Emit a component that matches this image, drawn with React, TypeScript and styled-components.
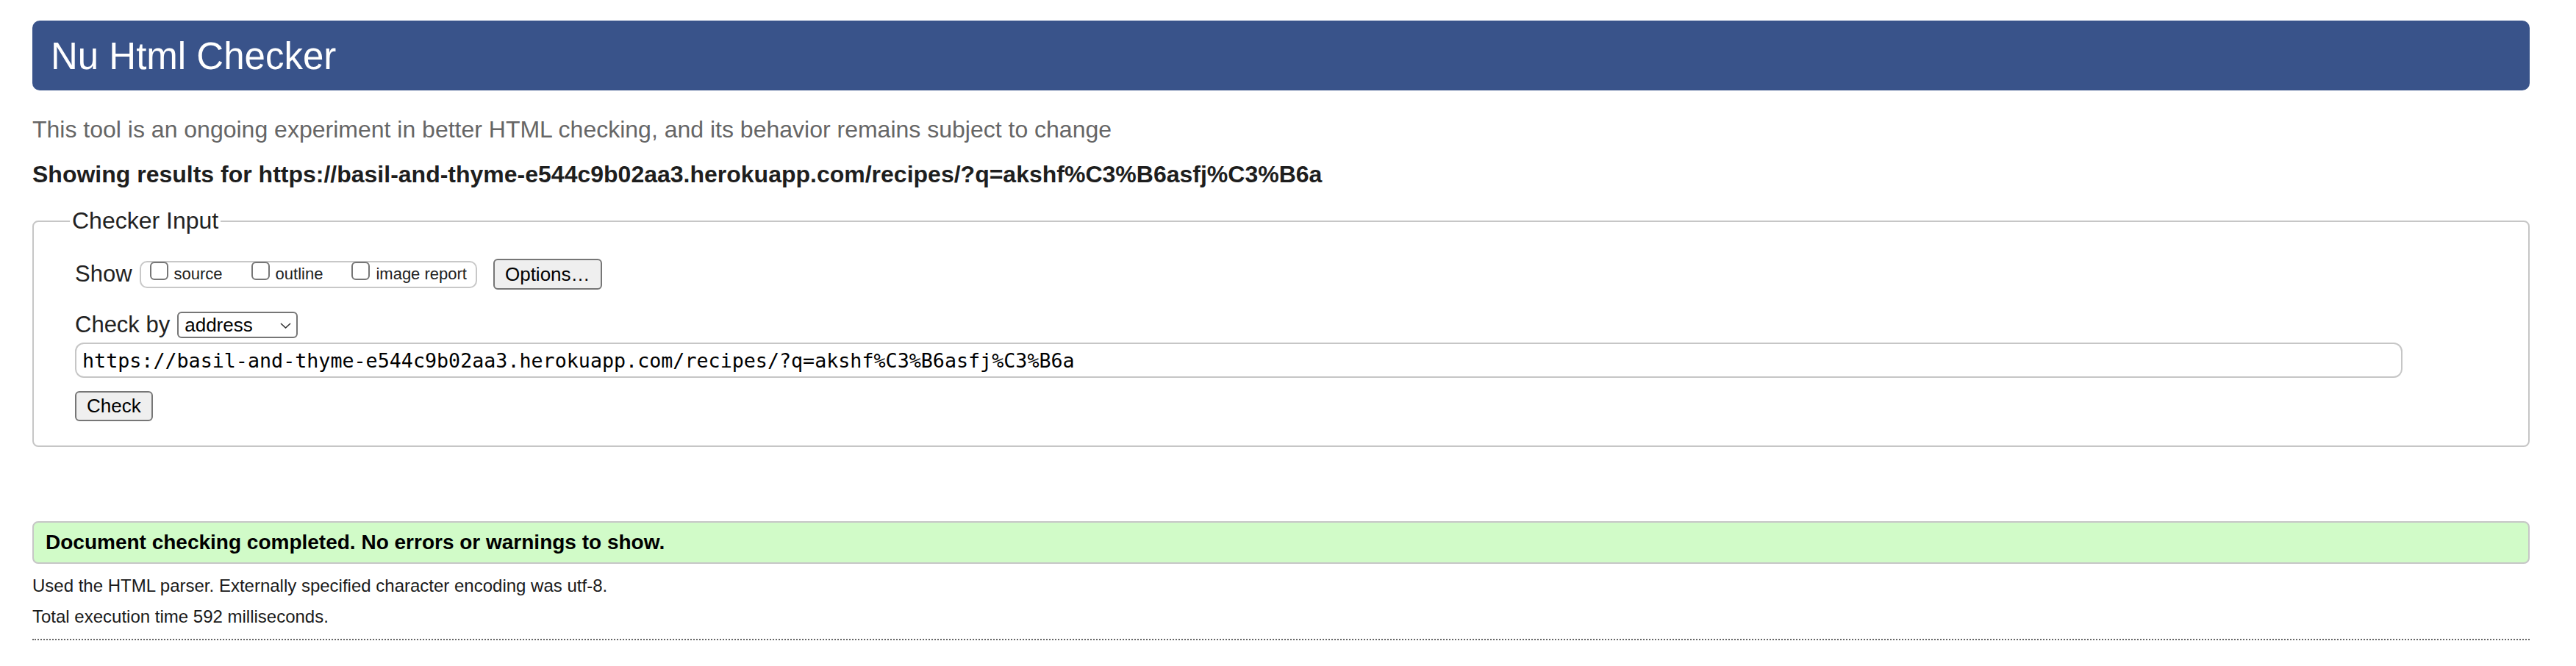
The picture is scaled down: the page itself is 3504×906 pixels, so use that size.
import React from "react";
import styled, { createGlobalStyle } from "styled-components";

/* Global */
const GlobalStyle = createGlobalStyle`
  html, body {
    margin: 0;
    padding: 0;
    background: #fff;
  }
  body {
    font-family: "Liberation Sans", Arial, Helvetica, sans-serif;
    color: #222;
  }
`;

/* Layout */
const Page = styled.main`
  width: 3397px;
  margin-left: 44px;
  padding-top: 28px;
`;

const Header = styled.h1`
  margin: 0;
  height: 95px;
  padding-left: 25px;
  background: #39538a;
  border-radius: 10px;
  color: #fff;
  font-size: 51px;
  font-weight: 400;
  line-height: 97px;
`;

const Intro = styled.p`
  margin: 35px 0 0;
  font-size: 32px;
  line-height: 36px;
  color: #666;
`;

const ResultsFor = styled.p`
  margin: 25px 0 0;
  font-size: 32px;
  font-weight: 700;
  line-height: 36px;
  color: #1e1e1e;
`;

/* Checker input form */
const InputSet = styled.fieldset`
  margin: 27px 0 0;
  padding: 33px 171px 33px 49px;
  border: 2px solid #c6c6c6;
  border-radius: 8px;
  min-width: 0;
`;

const Legend = styled.legend`
  padding: 0 3px;
  font-size: 32px;
  line-height: 37px;
  color: #222;
`;

const Rows = styled.div`
  padding-left: 7px;
  display: flex;
  flex-direction: column;
  align-items: flex-start;
`;

const Row = styled.div<{ $height: number; $top?: number }>`
  display: flex;
  align-items: center;
  height: ${(p) => p.$height}px;
  margin-top: ${(p) => p.$top ?? 0}px;
`;

const RowLabel = styled.span`
  font-size: 31px;
  color: #222;
`;

const ShowGroup = styled.span`
  display: flex;
  align-items: flex-start;
  gap: 31px;
  margin-left: 10px;
  height: 37px;
  box-sizing: border-box;
  padding: 0 12px 0 4px;
  border: 2px solid #c8c8c8;
  border-radius: 10px;
`;

const Option = styled.label`
  display: flex;
  align-items: flex-end;
  margin-top: -1px;
  font-size: 22px;
  line-height: 22px;
  color: #222;
`;

const Checkbox = styled.input.attrs({ type: "checkbox" })`
  appearance: none;
  width: 25px;
  height: 25px;
  margin: 0 8px 3px 8px;
  box-sizing: border-box;
  border: 2px solid #767676;
  border-radius: 6px;
  background: #fff;
`;

const Button = styled.button<{ $left?: number; $top?: number; $height: number }>`
  margin: ${(p) => p.$top ?? 0}px 0 0 ${(p) => p.$left ?? 0}px;
  height: ${(p) => p.$height}px;
  padding: 0 14px;
  box-sizing: border-box;
  border: 2px solid #767676;
  border-radius: 6px;
  background: #efefef;
  font-family: "Liberation Sans", Arial, sans-serif;
  font-size: 26px;
  color: #000;
`;

const SelectWrap = styled.span`
  position: relative;
  display: block;
  width: 164px;
  height: 36px;
  margin-left: 10px;
`;

const Select = styled.select`
  appearance: none;
  width: 100%;
  height: 100%;
  box-sizing: border-box;
  padding: 0 0 0 8px;
  border: 2px solid #767676;
  border-radius: 6px;
  background: #fff;
  font-family: "Liberation Sans", Arial, sans-serif;
  font-size: 26px;
  color: #000;
`;

const Chevron = styled.svg`
  position: absolute;
  right: 9px;
  top: 15px;
  width: 15px;
  height: 8px;
  pointer-events: none;
`;

const UrlInput = styled.input`
  display: block;
  width: 100%;
  height: 48px;
  margin-top: 6px;
  box-sizing: border-box;
  padding: 0 8px;
  border: 2px solid #c6c6c6;
  border-radius: 12px;
  font-family: "DejaVu Sans Mono", "Liberation Mono", monospace;
  font-size: 26.7px;
  color: #000;
`;

/* Results */
const Success = styled.p`
  margin: 101px 0 0;
  height: 58px;
  box-sizing: border-box;
  padding-left: 16px;
  border: 2px solid #c6c6c6;
  border-radius: 8px;
  background: #d1fbc8;
  font-size: 28px;
  font-weight: 700;
  line-height: 54px;
  color: #000;
`;

const Detail = styled.p<{ $top: number }>`
  margin: ${(p) => p.$top}px 0 0;
  font-size: 24px;
  line-height: 42px;
  color: #1a1a1a;
`;

const Rule = styled.hr`
  margin: 9px 0 0;
  height: 0;
  border: 0;
  border-top: 2px dotted #666;
`;

const url =
  "https://basil-and-thyme-e544c9b02aa3.herokuapp.com/recipes/?q=akshf%C3%B6asfj%C3%B6a";

export default function App() {
  return (
    <>
      <GlobalStyle />
      <Page>
        <Header>Nu Html Checker</Header>
        <Intro>
          This tool is an ongoing experiment in better HTML checking, and its
          behavior remains subject to change
        </Intro>
        <ResultsFor>Showing results for {url}</ResultsFor>

        <InputSet>
          <Legend>Checker Input</Legend>
          <Rows>
            <Row $height={42}>
              <RowLabel>Show</RowLabel>
              <ShowGroup>
                <Option>
                  <Checkbox />
                  source
                </Option>
                <Option>
                  <Checkbox />
                  outline
                </Option>
                <Option>
                  <Checkbox />
                  image report
                </Option>
              </ShowGroup>
              <Button type="button" $left={22} $height={42}>
                Options…
              </Button>
            </Row>
            <Row $height={36} $top={30}>
              <RowLabel>Check by</RowLabel>
              <SelectWrap>
                <Select defaultValue="address">
                  <option value="address">address</option>
                  <option value="file">file upload</option>
                  <option value="text">text input</option>
                </Select>
                <Chevron viewBox="0 0 15 8">
                  <path
                    d="M1 1 L7.5 7 L14 1"
                    fill="none"
                    stroke="#333"
                    strokeWidth="1.6"
                  />
                </Chevron>
              </SelectWrap>
            </Row>
            <UrlInput type="url" defaultValue={url} />
            <Button type="submit" $top={18} $height={41}>
              Check
            </Button>
          </Rows>
        </InputSet>

        <Success>Document checking completed. No errors or warnings to show.</Success>
        <Detail $top={9}>
          Used the HTML parser. Externally specified character encoding was utf-8.
        </Detail>
        <Detail $top={0}>Total execution time 592 milliseconds.</Detail>
        <Rule />
      </Page>
    </>
  );
}
